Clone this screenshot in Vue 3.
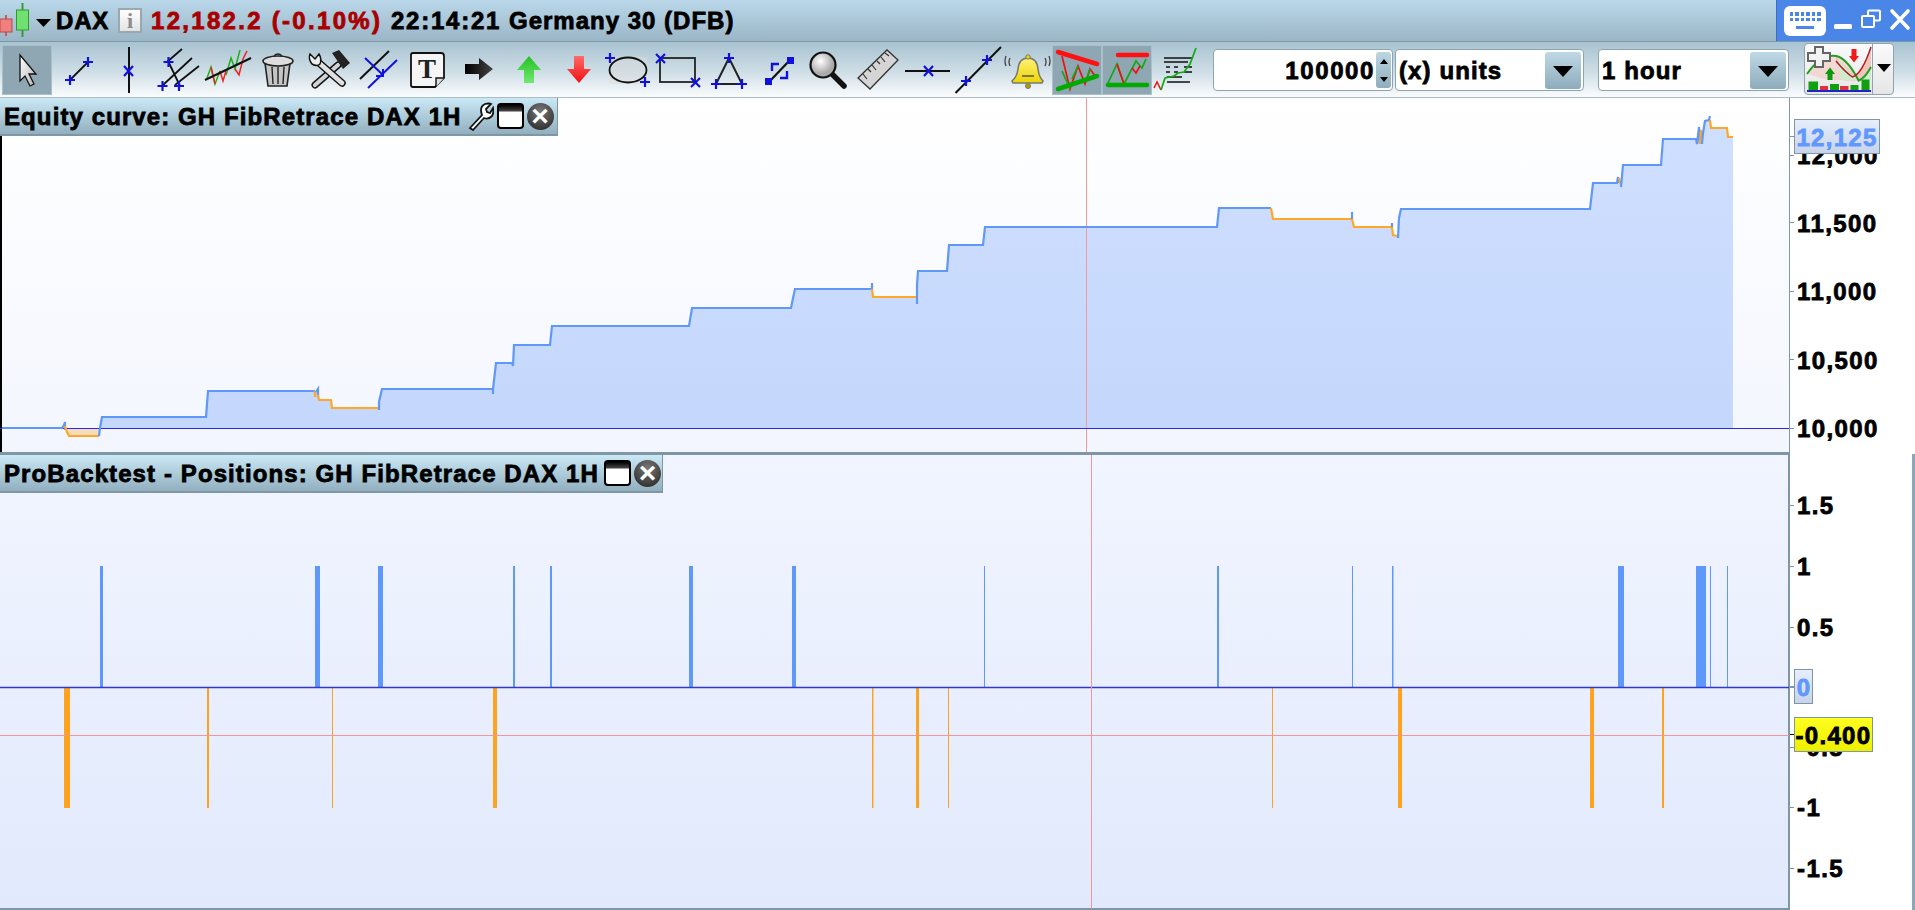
<script setup>
const blue = '#5f98f8'
const orange = '#ffa726'
const segs = [
  ['b', '2,428 62,428 64,425 65,422 65,430'],
  ['o', '65,426 67,432 69,436 99,436'],
  ['b', '99,436 100,428 102,417 206,417 208,391 315,391'],
  ['o', '315,391 315,397'],
  ['b', '316,392 318,389 318,397'],
  ['o', '318,395 319,400 331,400 332,408 379,408'],
  ['b', '379,410 379,402 382,389 493,389 493,394 493,389 496,363 512,363 513,366 514,345 550,345 552,326 689,326 692,308 791,308 793,298 795,289 872,289 872,283'],
  ['o', '872,289 873,297 916,297'],
  ['b', '917,304 917,285 918,271 947,271 949,245 983,245 985,227 1217,227 1219,208 1271,208'],
  ['o', '1271,208 1273,219 1351,219'],
  ['b', '1352,220 1352,212'],
  ['o', '1352,219 1354,227 1391,227'],
  ['b', '1392,227 1392,223'],
  ['o', '1392,227 1393,235 1397,236'],
  ['b', '1398,238 1399,218 1401,209 1590,209 1593,183 1617,183 1618,177 1618,183'],
  ['o', '1619,178 1621,185'],
  ['b', '1621,187 1623,165 1661,165 1663,139 1696,139 1697,144 1699,127 1700,144'],
  ['o', '1700,144 1701,130 1702,138'],
  ['b', '1702,144 1703,133 1705,121 1709,120 1710,116'],
  ['o', '1710,120 1711,128 1727,128 1728,137 1733,137']
].map(([c, pts]) => ({ color: c === 'b' ? blue : orange, pts }))

const area = '100,428 ' + segs.slice(2).map(s => s.pts).join(' ') + ' 1733,428'

const upBars = [[100,3],[315,5],[378,5],[513,2],[550,2],[689,4],[792,4],[984,1],[1217,2],[1352,1],[1392,1.5],[1618,6],[1696,10],[1710,1],[1727,1]]
const downBars = [[64,6],[207,2],[332,1],[493,4],[872,1.5],[916,3],[948,1],[1272,1],[1398,4],[1590,4],[1662,2]]

const eqTicks = [['10,000',428],['10,500',359.5],['11,000',291],['11,500',222.5],['12,000',155]]
  .map(([t, y]) => ({ t, top: y - 98 }))
const posTicks = [['1.5',505],['1',566],['0.5',627],['0',687],['-0.5',747],['-1',807],['-1.5',868]]
  .map(([t, y]) => ({ t, top: y - 454 }))
const kbKeys = [0,1,2,3,4,5]
</script>

<template>
  <div class="page">
    <header class="titlebar">
      <svg class="logo" width="52" height="41" viewBox="0 0 52 41">
        <path d="M22.500 3V37" stroke="#3a9a3a" stroke-width="2"/>
        <path d="M6 15V36" stroke="#c85a5a" stroke-width="2"/>
        <rect x="0" y="19" width="12" height="13" fill="#f08080" stroke="#b84a4a"/>
        <rect x="16.500" y="10" width="12" height="20" fill="#70e070" stroke="#2f9a2f"/>
        <path d="M36 19H51L43.500 27Z" fill="#000"/>
      </svg>
      <span class="ttl sym">DAX</span>
      <span class="info">i</span>
      <span class="ttl price">12,182.2 (-0.10%)</span>
      <span class="ttl clock">22:14:21</span>
      <span class="ttl name">Germany 30 (DFB)</span>
      <div class="winctl">
        <div class="kb">
          <div class="kbrow"><i v-for="k in kbKeys" :key="k"></i></div>
          <div class="kbrow"><i v-for="k in kbKeys" :key="k"></i></div>
          <div class="kbspace"></div>
        </div>
        <svg width="20" height="41" viewBox="0 0 20 41"><rect x="1" y="24" width="18" height="5" rx="1.500" fill="#fff"/></svg>
        <svg width="22" height="41" viewBox="0 0 22 41">
          <rect x="8" y="10.500" width="12" height="10" rx="1" fill="none" stroke="#fff" stroke-width="2"/>
          <rect x="2" y="16" width="12" height="11" rx="1" fill="#4a86e8" stroke="#fff" stroke-width="2"/>
        </svg>
        <svg width="22" height="41" viewBox="0 0 22 41"><path d="M3 11L19 28M19 11L3 28" stroke="#fff" stroke-width="3.600" stroke-linecap="round"/></svg>
      </div>
    </header>

    <nav class="toolbar">
      <div class="tool on">
        <svg width="50" height="50" viewBox="0 0 50 50"><path d="M18 10L34 29H27L32 39L28 41L23 31L18 36Z" fill="url(#ptr)" stroke="#111" stroke-width="1.300"/><defs><linearGradient id="ptr" x1="0" y1="0" x2="1" y2="1"><stop offset="0" stop-color="#fff"/><stop offset="1" stop-color="#b5b5b5"/></linearGradient></defs></svg>
      </div>
      <div class="tool">
        <svg width="50" height="50" viewBox="0 0 50 50"><path d="M18 35L36 17" stroke="#111" stroke-width="1.800"/><path d="M18 30V40M13 35H23M36 12V22M31 17H41" stroke="#11d" stroke-width="2.200"/></svg>
      </div>
      <div class="tool">
        <svg width="50" height="50" viewBox="0 0 50 50"><path d="M27 2V48" stroke="#111" stroke-width="2"/><path d="M22 21L31 31M31 21L22 31" stroke="#11d" stroke-width="2.200"/></svg>
      </div>
      <div class="tool">
        <svg width="50" height="50" viewBox="0 0 50 50"><path d="M15 17L30 4M11 40L40 13M23 40L47 21M17 18L28 41" stroke="#111" stroke-width="1.800"/><path d="M16.500 12V22M11.500 17H21.500M10.500 36V46M5.500 41H15.500M27 36V46M22 41H32" stroke="#11d" stroke-width="2.200"/></svg>
      </div>
      <div class="tool">
        <svg width="50" height="50" viewBox="0 0 50 50"><path d="M5 33L9 22L13 39L18 26M24 30L29 13L33 24L38 5" fill="none" stroke="#1db21d" stroke-width="1.500"/><path d="M9 22L13 39M18 26L21 36L24 26M33 24L37 30L41 14L45 6" fill="none" stroke="#e22" stroke-width="1.500"/><path d="M3 35L49 13" stroke="#111" stroke-width="2"/></svg>
      </div>
      <div class="tool">
        <svg width="50" height="50" viewBox="0 0 50 50"><path d="M13 18L16 41H35L38 18Z" fill="#c5c5c5" stroke="#222" stroke-width="1.600"/><ellipse cx="26" cy="16" rx="15" ry="5" fill="#ddd" stroke="#222" stroke-width="1.600"/><path d="M22 11Q26 7 30 11" fill="none" stroke="#222" stroke-width="1.600"/><path d="M20 22L21 39M26 22V39M32 22L31 39" stroke="#222" stroke-width="1.400"/></svg>
      </div>
      <div class="tool">
        <svg width="50" height="50" viewBox="0 0 50 50"><path d="M36 20L13 40" stroke="#111" stroke-width="7" stroke-linecap="round"/><path d="M36 20L13 40" stroke="#d2d2d2" stroke-width="4.200" stroke-linecap="round"/><path d="M30 8L37 5L48 18L41 24Z" fill="#222"/><path d="M16 17L40 38" stroke="#111" stroke-width="7.500" stroke-linecap="round"/><path d="M16 17L40 38" stroke="#e0e0e0" stroke-width="4.700" stroke-linecap="round"/><path d="M8 9L13 14L17 9Q20 14 18 19Q15 22 10 19Q6 14 8 9Z" fill="#eee" stroke="#111" stroke-width="1.500"/></svg>
      </div>
      <div class="tool">
        <svg width="50" height="50" viewBox="0 0 50 50"><path d="M8 34L37 6" stroke="#111" stroke-width="2"/><path d="M16 43L45 15" stroke="#11d" stroke-width="2"/><path d="M13 13L31 30M31 24V31H24" fill="none" stroke="#11d" stroke-width="2"/></svg>
      </div>
      <div class="tool">
        <svg width="50" height="50" viewBox="0 0 50 50"><path d="M11 8H39Q42 8 42 11V33L33 42H11Q9 42 9 40V10Q9 8 11 8Z" fill="#f5f5f5" stroke="#111" stroke-width="1.800"/><path d="M42 33H34V42" fill="#ddd" stroke="#111" stroke-width="1.400"/><text x="25" y="33" text-anchor="middle" class="tglyph">T</text></svg>
      </div>
      <div class="tool">
        <svg width="50" height="50" viewBox="0 0 50 50"><path d="M13 19H27V13L41 24L27 35V29H13Z" fill="url(#arrK)"/><defs><linearGradient id="arrK" x1="0" x2="1" y1="0" y2="0"><stop offset="0" stop-color="#000"/><stop offset="1" stop-color="#444"/></linearGradient></defs></svg>
      </div>
      <div class="tool">
        <svg width="50" height="50" viewBox="0 0 50 50"><path d="M27 11L39 25H32V38H22V25H15Z" fill="url(#arrG)"/><defs><linearGradient id="arrG" x1="0" x2="0" y1="0" y2="1"><stop offset="0" stop-color="#25c025"/><stop offset="1" stop-color="#6fe96f"/></linearGradient></defs></svg>
      </div>
      <div class="tool">
        <svg width="50" height="50" viewBox="0 0 50 50"><path d="M22 11H32V24H39L27 38L15 24H22Z" fill="url(#arrR)"/><defs><linearGradient id="arrR" x1="0" x2="0" y1="0" y2="1"><stop offset="0" stop-color="#ff6a6a"/><stop offset="1" stop-color="#f01010"/></linearGradient></defs></svg>
      </div>
      <div class="tool">
        <svg width="50" height="50" viewBox="0 0 50 50"><rect x="7" y="12" width="38" height="27" fill="#dcdcdc" opacity=".45"/><ellipse cx="26" cy="25" rx="18.500" ry="12.500" fill="none" stroke="#111" stroke-width="1.800"/><path d="M8 8V18M3 13H13M43 32V42M38 37H48" stroke="#11d" stroke-width="2.200"/></svg>
      </div>
      <div class="tool">
        <svg width="50" height="50" viewBox="0 0 50 50"><rect x="8" y="13" width="35" height="24" fill="none" stroke="#222" stroke-width="1.800"/><path d="M4 9L13 18M13 9L4 18M39 33L48 42M48 33L39 42" stroke="#11d" stroke-width="2.200"/></svg>
      </div>
      <div class="tool">
        <svg width="50" height="50" viewBox="0 0 50 50"><path d="M27 13L14 39H40Z" fill="none" stroke="#222" stroke-width="2"/><path d="M27 8V18M22 13H32M14 34V44M9 39H19M40 34V44M35 39H45" stroke="#11d" stroke-width="2.200"/></svg>
      </div>
      <div class="tool">
        <svg width="50" height="50" viewBox="0 0 50 50"><path d="M17 37L38 15" stroke="#111" stroke-width="2.200"/><rect x="13" y="33" width="7" height="7" fill="#11d"/><rect x="35" y="12" width="7" height="7" fill="#11d"/><path d="M20 26V19H27M35 26V33H28" fill="none" stroke="#11d" stroke-width="2.400"/></svg>
      </div>
      <div class="tool">
        <svg width="50" height="50" viewBox="0 0 50 50"><path d="M30 29L42 41" stroke="#111" stroke-width="5.500" stroke-linecap="round"/><circle cx="21" cy="20" r="12.500" fill="url(#lens)" stroke="#111" stroke-width="2.200"/><defs><radialGradient id="lens" cx=".4" cy=".35"><stop offset="0" stop-color="#fff"/><stop offset="1" stop-color="#aaa"/></radialGradient></defs></svg>
      </div>
      <div class="tool">
        <svg width="50" height="50" viewBox="0 0 50 50"><path d="M6 33L35 5L46 15L18 44Z" fill="#d5d5d5" stroke="#333" stroke-width="1.300"/><path d="M11 29L15 34M16 24L19 27M20 20L24 25M25 16L28 19M29 12L33 17M33 8L37 11" stroke="#333" stroke-width="1.200"/></svg>
      </div>
      <div class="tool">
        <svg width="50" height="50" viewBox="0 0 50 50"><path d="M3 26H48" stroke="#111" stroke-width="2"/><path d="M22 21L31 31M31 21L22 31" stroke="#11d" stroke-width="2.200"/></svg>
      </div>
      <div class="tool">
        <svg width="50" height="50" viewBox="0 0 50 50"><path d="M3.500 48L49 2" stroke="#111" stroke-width="2"/><path d="M35 10V20M30 15H40M14 31V41M9 36H19" stroke="#11d" stroke-width="2.200"/></svg>
      </div>
      <div class="tool">
        <svg width="50" height="50" viewBox="0 0 50 50"><path d="M26 13Q35 13 36 24Q37 32 41 36L40 38H11L10 36Q15 32 16 24Q17 13 26 13Z" fill="url(#bell)" stroke="#777" stroke-width="1.600"/><path d="M20 31H32" stroke="#555" stroke-width="1.500"/><circle cx="26" cy="41" r="2.500" fill="#b59a00" stroke="#777"/><circle cx="26" cy="12" r="2.200" fill="#ecd800" stroke="#777"/><path d="M8 13Q6 17 8 21M4 11Q2 16 4 21M43 13Q45 17 43 21M47 11Q49 16 47 21" fill="none" stroke="#444" stroke-width="1.300"/><defs><linearGradient id="bell" x1="0" x2="0" y1="0" y2="1"><stop offset="0" stop-color="#fff27a"/><stop offset="1" stop-color="#ecd400"/></linearGradient></defs></svg>
      </div>
      <div class="tool on">
        <svg width="50" height="50" viewBox="0 0 50 50"><path d="M10 11L18 44L26 21L33 39L38 24L44 32" fill="none" stroke="#e11" stroke-width="1.700"/><path d="M10 26L18 44M26 21L20 34M38 24L34 36" fill="none" stroke="#1a1" stroke-width="1.700"/><path d="M6 7L45 19" stroke="#f11" stroke-width="4.500" stroke-linecap="round"/><path d="M6 44L45 31" stroke="#0a0" stroke-width="4.500" stroke-linecap="round"/></svg>
      </div>
      <div class="tool on">
        <svg width="50" height="50" viewBox="0 0 50 50"><path d="M6 38L15 19L22 39L34 16L40 23L44 14" fill="none" stroke="#1a1" stroke-width="1.700"/><path d="M15 19L22 39M30 23L34 28L38 21" fill="none" stroke="#e11" stroke-width="1.700"/><path d="M16 10H45" stroke="#f11" stroke-width="4.500" stroke-linecap="round"/><path d="M6 40H45" stroke="#0a0" stroke-width="4.500" stroke-linecap="round"/></svg>
      </div>
      <div class="tool">
        <svg width="50" height="50" viewBox="0 0 50 50"><path d="M12 13H40M12 17H36M14 22H18M22 22H26M32 22H40M14 27H18M22 27H26M32 27H40M15 32H30M15 37H38" stroke="#111" stroke-width="1.700"/><path d="M2 43L5 37L9 45" fill="none" stroke="#e11" stroke-width="1.500"/><path d="M9 45L13 33L22 31L26 28L32 27L38 19L44 3" fill="none" stroke="#1a1" stroke-width="1.700"/></svg>
      </div>

      <div class="qty">
        <span class="qtyval">100000</span>
        <div class="spin"><b class="tri up"></b><b class="tri dn"></b></div>
      </div>
      <div class="sel units"><span>(x) units</span><i class="selbtn"></i></div>
      <div class="sel hour"><span>1 hour</span><i class="selbtn"></i></div>
      <div class="addbtn">
        <svg width="67" height="50" viewBox="0 0 67 50">
          <path d="M31 17Q40 28 47.500 33Q57 30 66 3V36H53Q42 24 31 12Z" fill="#f3c4bc"/>
          <path d="M3 30Q16 12 31 12Q42 14 53 36H66V23Q60 34 53.700 36.700Q44 38 36 36H24Q14 34 3 30Z" fill="#f3c4bc" opacity=".55"/>
          <path d="M33 14Q43 28 53 37Q60 34 66 23V36H36Z" fill="#cfeccd"/>
          <path d="M2 30Q16 10 31 12Q42 14 53.700 36.700Q60 34 66 23" fill="none" stroke="#1ea01e" stroke-width="1.900"/>
          <path d="M31 17Q40 28 47.500 33Q57 30 66 3" fill="none" stroke="#b02020" stroke-width="1.500"/>
          <path d="M10 3H18V9H25V17H18V23H10V17H3V9H10Z" fill="#f2f2f2" stroke="#666" stroke-width="2"/>
          <path d="M46.500 5H51.500V12H54L49 18.500L44 12H46.500Z" fill="#ee1c1c"/>
          <path d="M25 23.500L30 30H27.500V36H22.500V30H20Z" fill="#0a9a0a"/>
          <rect x="3.500" y="37.500" width="9.500" height="8.500" fill="#10a010"/>
          <rect x="15" y="42" width="8" height="4" fill="#e03040"/>
          <rect x="25" y="40" width="9" height="6" fill="#10a010"/>
          <rect x="35" y="42" width="8.500" height="4" fill="#e03040"/>
          <rect x="45.500" y="41" width="8" height="5" fill="#10a010"/>
          <rect x="56.500" y="35.500" width="8" height="10.500" fill="#10a010"/>
          <path d="M2 47H66" stroke="#2222cc" stroke-width="1.800"/>
        </svg>
        <span class="adddiv"></span>
        <svg width="20" height="50" viewBox="0 0 20 50"><path d="M4 20H18L11 28Z" fill="#000"/></svg>
      </div>
    </nav>

    <section class="row row1">
      <div class="plot plot1">
        <svg class="chart" width="1789" height="354" viewBox="0 98 1789 354">
          <defs><linearGradient id="fillA" gradientUnits="userSpaceOnUse" x1="0" x2="0" y1="120" y2="428"><stop offset="0" stop-color="#cfdfff"/><stop offset="1" stop-color="#c4d7fc"/></linearGradient></defs>
          <path d="M0 136H2V452H0Z" fill="#000"/>
          <polygon :points="area" fill="url(#fillA)"/>
          <polygon points="66,428 69,436 99,436 100,428" fill="#f7dcba"/>
          <path d="M1086.500 98V452" stroke="#f59a9a" stroke-width="1"/>
          <path d="M0 428.500H1789" stroke="#2a2ae0" stroke-width="1.200"/>
          <polyline v-for="(s, i) in segs" :key="i" :points="s.pts" fill="none" :stroke="s.color" stroke-width="2.200"/>
        </svg>
        <div class="ptitle t1">
          <span class="ptext">Equity curve: GH FibRetrace DAX 1H</span>
          <svg width="27" height="30" viewBox="0 0 27 30"><path d="M3 27L15 14Q12 6 18 3Q22 2 24 3L19 8L20 11L23 12L26 7Q27 12 25 15Q21 19 17 17L6 29Z" fill="#fff" stroke="#111" stroke-width="1.800"/></svg>
          <span class="winbtn"></span>
          <span class="xbtn">×</span>
        </div>
      </div>
      <div class="axis">
        <div v-for="k in eqTicks" :key="k.t" class="tick" :style="{ top: k.top + 'px' }"><i></i><span>{{ k.t }}</span></div>
        <div class="vbox bluev eqv"><i class="lead"></i>12,125</div>
      </div>
    </section>

    <section class="row row2">
      <div class="plot plot2">
        <svg class="chart" width="1789" height="454" viewBox="0 455 1789 454">
          <rect v-for="b in upBars" :key="'u' + b[0]" :x="b[0]" y="566" :width="b[1]" height="121" fill="#5f98fb"/>
          <rect v-for="b in downBars" :key="'d' + b[0]" :x="b[0]" y="688" :width="b[1]" height="120" fill="#ffa31f"/>
          <path d="M0 687.500H1789" stroke="#2f38d0" stroke-width="1.400"/>
          <path d="M0 735.500H1789" stroke="#f09898" stroke-width="1"/>
          <path d="M1091.500 455V909" stroke="#f09898" stroke-width="1"/>
        </svg>
        <div class="ptitle t2">
          <span class="ptext">ProBacktest - Positions: GH FibRetrace DAX 1H</span>
          <span class="winbtn"></span>
          <span class="xbtn">×</span>
        </div>
      </div>
      <div class="axis">
        <div v-for="k in posTicks" :key="k.t" class="tick" :style="{ top: k.top + 'px' }"><i></i><span>{{ k.t }}</span></div>
        <div class="vbox bluev zerov"><i class="lead"></i>0</div>
        <div class="vbox yellowv"><i class="lead dark"></i>-0.400</div>
      </div>
      <div class="gutter"></div>
    </section>
  </div>
</template>

<style>
html, body { margin: 0; background: #fff; overflow: hidden; }
</style>

<style scoped>
.page { width: 1915px; height: 910px; display: flex; flex-direction: column; font-family: "Liberation Sans", Arial, sans-serif; overflow: hidden; background: #fff; }

.titlebar { height: 41px; flex: none; display: flex; align-items: center; background: linear-gradient(#bad8ea, #9bb6c6); border-bottom: 1px solid #7d97a6; }
.logo { flex: none; margin-right: 4px; }
.ttl { font-size: 24px; font-weight: 700; color: #000; -webkit-text-stroke: .8px currentColor; white-space: nowrap; line-height: 41px; }
.sym { letter-spacing: .8px; width: 53px; }
.info { width: 20px; height: 21px; margin: 0 9px 0 9px; padding: 0; border: 2px solid #9aa9b1; background: linear-gradient(#fff, #e3e3e3); color: #8b8b8b; font: 700 22px/22px "Liberation Serif", serif; text-align: center; }
.price { color: #a80000; letter-spacing: 2.3px; width: 231px; margin-right: 9px; }
.clock { letter-spacing: 1.75px; width: 110px; margin-right: 8px; }
.name { letter-spacing: 1px; }
.winctl { margin-left: auto; width: 139px; height: 41px; box-sizing: border-box; background: #4a86e8; border-left: 1px solid #3a6cc0; display: flex; align-items: flex-start; padding-left: 7px; gap: 7px; }
.winctl svg { flex: none; margin-left: 0; }
.kb { width: 42px; height: 30px; margin-top: 6px; border-radius: 6px; background: #fff; display: flex; flex-direction: column; align-items: center; padding-top: 6px; box-sizing: border-box; gap: 2px; }
.kbrow { display: flex; gap: 2px; }
.kbrow i { width: 3.500px; height: 3.500px; background: #4a86e8; display: block; }
.kbspace { width: 18px; height: 3px; margin-top: 3px; background: #4a86e8; }

.toolbar { height: 56px; flex: none; display: flex; align-items: flex-start; padding: 3px 0 0 2px; box-sizing: border-box; background: linear-gradient(#a8c3d1, #cfdee6 55%, #fafcfd); border-bottom: 1px solid #a9bcc7; }
.tool { width: 50px; height: 50px; flex: none; box-sizing: border-box; }
.tool.on { background: #8fa6b3; box-shadow: inset 0 0 0 1px #a9c0cd; }
.tool svg { display: block; }
.tglyph { font: 700 27px "Liberation Serif", serif; fill: #222; }

.qty { width: 180px; height: 42px; margin: 4px 0 0 11px; box-sizing: border-box; flex: none; background: #fff; border: 1px solid #8ea4b1; border-radius: 4px; display: flex; align-items: center; justify-content: flex-end; }
.qtyval { font-size: 24px; font-weight: 700; letter-spacing: 1.600px; -webkit-text-stroke: .8px #000; padding-top: 2px; }
.spin { width: 15px; height: 36px; margin: 0 1px 0 1px; border-radius: 3px; background: linear-gradient(#bcd5e3, #8faebd); display: flex; flex-direction: column; align-items: center; justify-content: space-around; }
.tri { width: 0; height: 0; border-left: 4.500px solid transparent; border-right: 4.500px solid transparent; display: block; }
.tri.up { border-bottom: 5px solid #000; }
.tri.dn { border-top: 5px solid #000; }
.sel { height: 42px; margin-top: 4px; box-sizing: border-box; flex: none; background: #fff; border: 1px solid #8ea4b1; border-radius: 4px; display: flex; align-items: center; justify-content: space-between; padding: 0 2px 0 3px; font-size: 24px; font-weight: 700; letter-spacing: 1.100px; -webkit-text-stroke: .8px #000; }
.sel span { padding-top: 2px; }
.units { width: 189px; margin-left: 2px; }
.hour { width: 191px; margin-left: 14px; }
.selbtn { width: 36px; height: 37px; border-radius: 3px; background: linear-gradient(#bfd8e6, #8dacbb); position: relative; display: block; }
.selbtn::after { content: ""; position: absolute; left: 8px; top: 14px; border-left: 10px solid transparent; border-right: 10px solid transparent; border-top: 11px solid #000; }
.addbtn { width: 90px; height: 52px; margin: -2px 0 0 15px; box-sizing: border-box; flex: none; border: 1px solid #8ea4b1; border-radius: 4px; background: linear-gradient(#fafafa, #e6e6e6); display: flex; align-items: center; }
.addbtn svg { flex: none; display: block; }
.adddiv { width: 1px; height: 100%; background: #8ea4b1; flex: none; }

.row { display: flex; flex: none; position: relative; }
.row1 { height: 356px; }
.row2 { height: 456px; }
.plot { flex: none; box-sizing: border-box; position: relative; }
.plot1 { height: 356px; border-right: 1px solid #7f97a5; border-bottom: 2px solid #7f97a5; width: 1790px; background: linear-gradient(#fff, #f3f6fe); }
.plot2 { height: 456px; border-top: 1px solid #7f97a5; border-right: 2px solid #7f97a5; border-bottom: 2px solid #7f97a5; width: 1790px; background: linear-gradient(#f1f5ff, #e1e9fc); }
.chart { display: block; }
.ptitle { position: absolute; left: 0; top: 0; height: 38px; box-sizing: border-box; padding-left: 4px; display: flex; align-items: center; background: linear-gradient(#cbe8f6, #91afbe); border-right: 1px solid #7f97a5; border-bottom: 2px solid #7f97a5; }
.t1 { width: 558px; gap: 3px; }
.t2 { width: 663px; gap: 3px; }
.ptext { font-size: 24px; font-weight: 700; letter-spacing: 1.100px; white-space: nowrap; -webkit-text-stroke: .8px #000; margin-right: 2px; padding-top: 2px; }
.winbtn { width: 27px; height: 26px; box-sizing: border-box; flex: none; border: 2px solid #000; border-radius: 4px; background: linear-gradient(#000 0, #444 6px, #fff 7px, #fff 100%); }
.xbtn { width: 27px; height: 27px; flex: none; border-radius: 50%; background: radial-gradient(circle at 50% 30%, #777, #222); color: #fff; font-size: 30px; line-height: 26px; font-weight: 700; text-align: center; }

.axis { width: 121px; flex: none; position: relative; background: #fff; }
.tick { position: absolute; left: 0; height: 28px; margin-top: -14px; display: flex; align-items: center; font-size: 24px; font-weight: 700; letter-spacing: 1.400px; -webkit-text-stroke: .8px #000; white-space: nowrap; }
.tick span { padding-top: 2px; }
.tick i { width: 4px; height: 1px; background: #7f97a5; margin-right: 3px; display: block; }
.vbox { position: absolute; box-sizing: border-box; height: 35px; left: 4px; border: 1px solid #7f97a5; font-size: 24px; font-weight: 700; line-height: 35px; letter-spacing: 1.300px; white-space: nowrap; text-align: center; }
.bluev { background: linear-gradient(#e6eefb, #c8d4ea); color: #6098ff; -webkit-text-stroke: .8px #6098ff; }
.eqv { top: 21px; width: 86px; }
.zerov { top: 215px; width: 19px; letter-spacing: 0; }
.yellowv { top: 263px; width: 79px; letter-spacing: 1.300px; background: linear-gradient(#ffff20, #eeee00); color: #000; -webkit-text-stroke: .8px #000; }
.lead { position: absolute; left: -5px; top: 16px; width: 4px; height: 1px; background: #7f97a5; display: block; }
.lead.dark { background: #000; }
.gutter { width: 4px; flex: none; margin-left: 1px; background: #8aa8b8; }
</style>
